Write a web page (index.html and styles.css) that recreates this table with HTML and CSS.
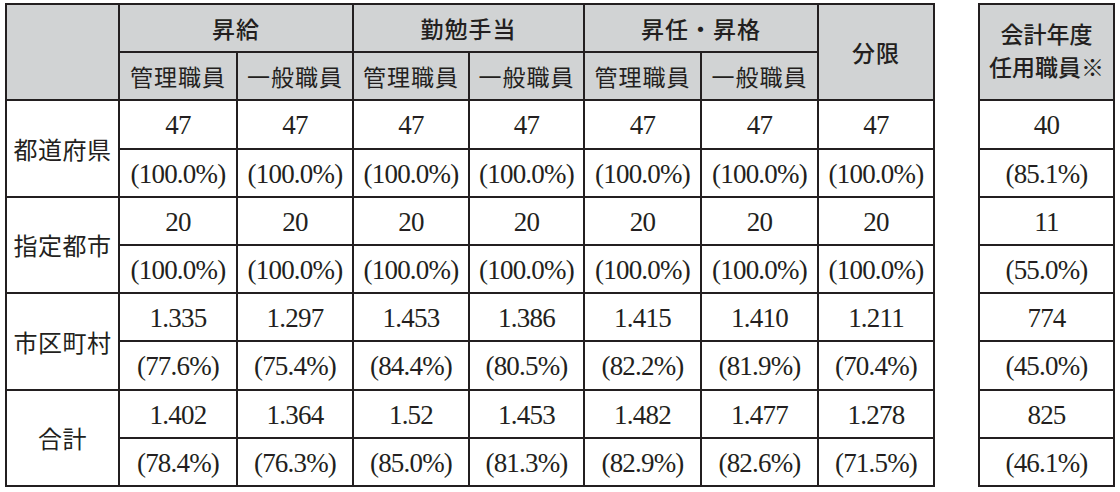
FILE: index.html
```html
<!DOCTYPE html>
<html lang="ja">
<head>
<meta charset="utf-8">
<link rel="stylesheet" href="styles.css">
</head>
<body>
<div class="wrap">
  <table class="main">
    <colgroup>
      <col class="c-label">
      <col class="c1"><col class="c2"><col class="c3"><col class="c4"><col class="c5"><col class="c6"><col class="c7">
    </colgroup>
    <thead>
      <tr>
        <th rowspan="2"></th>
        <th colspan="2" class="grp">昇給</th>
        <th colspan="2" class="grp">勤勉手当</th>
        <th colspan="2" class="grp">昇任・昇格</th>
        <th rowspan="2" class="grp">分限</th>
      </tr>
      <tr>
        <th class="sub">管理職員</th><th class="sub">一般職員</th>
        <th class="sub">管理職員</th><th class="sub">一般職員</th>
        <th class="sub">管理職員</th><th class="sub">一般職員</th>
      </tr>
    </thead>
    <tbody>
      <tr>
        <th rowspan="2" class="label">都道府県</th>
        <td>47</td><td>47</td><td>47</td><td>47</td><td>47</td><td>47</td><td>47</td>
      </tr>
      <tr>
        <td>(100.0%)</td><td>(100.0%)</td><td>(100.0%)</td><td>(100.0%)</td><td>(100.0%)</td><td>(100.0%)</td><td>(100.0%)</td>
      </tr>
      <tr>
        <th rowspan="2" class="label">指定都市</th>
        <td>20</td><td>20</td><td>20</td><td>20</td><td>20</td><td>20</td><td>20</td>
      </tr>
      <tr>
        <td>(100.0%)</td><td>(100.0%)</td><td>(100.0%)</td><td>(100.0%)</td><td>(100.0%)</td><td>(100.0%)</td><td>(100.0%)</td>
      </tr>
      <tr>
        <th rowspan="2" class="label">市区町村</th>
        <td>1.335</td><td>1.297</td><td>1.453</td><td>1.386</td><td>1.415</td><td>1.410</td><td>1.211</td>
      </tr>
      <tr>
        <td>(77.6%)</td><td>(75.4%)</td><td>(84.4%)</td><td>(80.5%)</td><td>(82.2%)</td><td>(81.9%)</td><td>(70.4%)</td>
      </tr>
      <tr>
        <th rowspan="2" class="label total">合計</th>
        <td>1.402</td><td>1.364</td><td>1.52</td><td>1.453</td><td>1.482</td><td>1.477</td><td>1.278</td>
      </tr>
      <tr>
        <td>(78.4%)</td><td>(76.3%)</td><td>(85.0%)</td><td>(81.3%)</td><td>(82.9%)</td><td>(82.6%)</td><td>(71.5%)</td>
      </tr>
    </tbody>
  </table>

  <table class="side">
    <thead>
      <tr class="tall">
        <th class="grp two">会計年度<br>任用職員※</th>
      </tr>
    </thead>
    <tbody>
      <tr><td>40</td></tr>
      <tr><td>(85.1%)</td></tr>
      <tr><td>11</td></tr>
      <tr><td>(55.0%)</td></tr>
      <tr><td>774</td></tr>
      <tr><td>(45.0%)</td></tr>
      <tr><td>825</td></tr>
      <tr><td>(46.1%)</td></tr>
    </tbody>
  </table>
</div>
</body>
</html>
```

FILE: styles.css
```css
html, body {
  margin: 0;
  padding: 0;
  background: #ffffff;
}

body {
  font-family: "Liberation Serif", "Noto Sans CJK JP", serif;
  color: #231f20;
}

.wrap {
  display: flex;
  align-items: flex-start;
  gap: 43px;
  padding: 3px 0 0 5px;
}

table {
  border-collapse: collapse;
  table-layout: fixed;
}

.main {
  width: 930px;
}

.side {
  width: 137px;
}

.c-label { width: 113px; }
.c1 { width: 118px; }
.c2 { width: 116px; }
.c3 { width: 116px; }
.c4 { width: 115px; }
.c5 { width: 117px; }
.c6 { width: 117px; }
.c7 { width: 116px; }

th, td {
  border: 2px solid #231f20;
  padding: 0;
  text-align: center;
  vertical-align: middle;
  white-space: nowrap;
}

tr {
  height: 48.2px;
}

.side tr.tall {
  height: 96.4px;
}

thead th {
  background: #d1d3d4;
  font-family: "Noto Sans CJK JP", sans-serif;
  font-size: 23px;
  line-height: 34px;
  color: #231f20;
}

th.grp {
  font-weight: 500;
  letter-spacing: 1px;
}

th.two {
  line-height: 33px;
  padding-bottom: 4px;
  letter-spacing: 0;
}

th.sub {
  font-weight: 400;
  letter-spacing: 1px;
}

td {
  font-family: "Liberation Serif", serif;
  font-size: 27px;
  letter-spacing: -0.8px;
  line-height: 30px;
  padding-top: 2px;
}

th.label {
  font-family: "Noto Sans CJK JP", sans-serif;
  font-weight: 400;
  font-size: 24px;
  letter-spacing: 0.5px;
  background: #ffffff;
  text-align: center;
}
```
